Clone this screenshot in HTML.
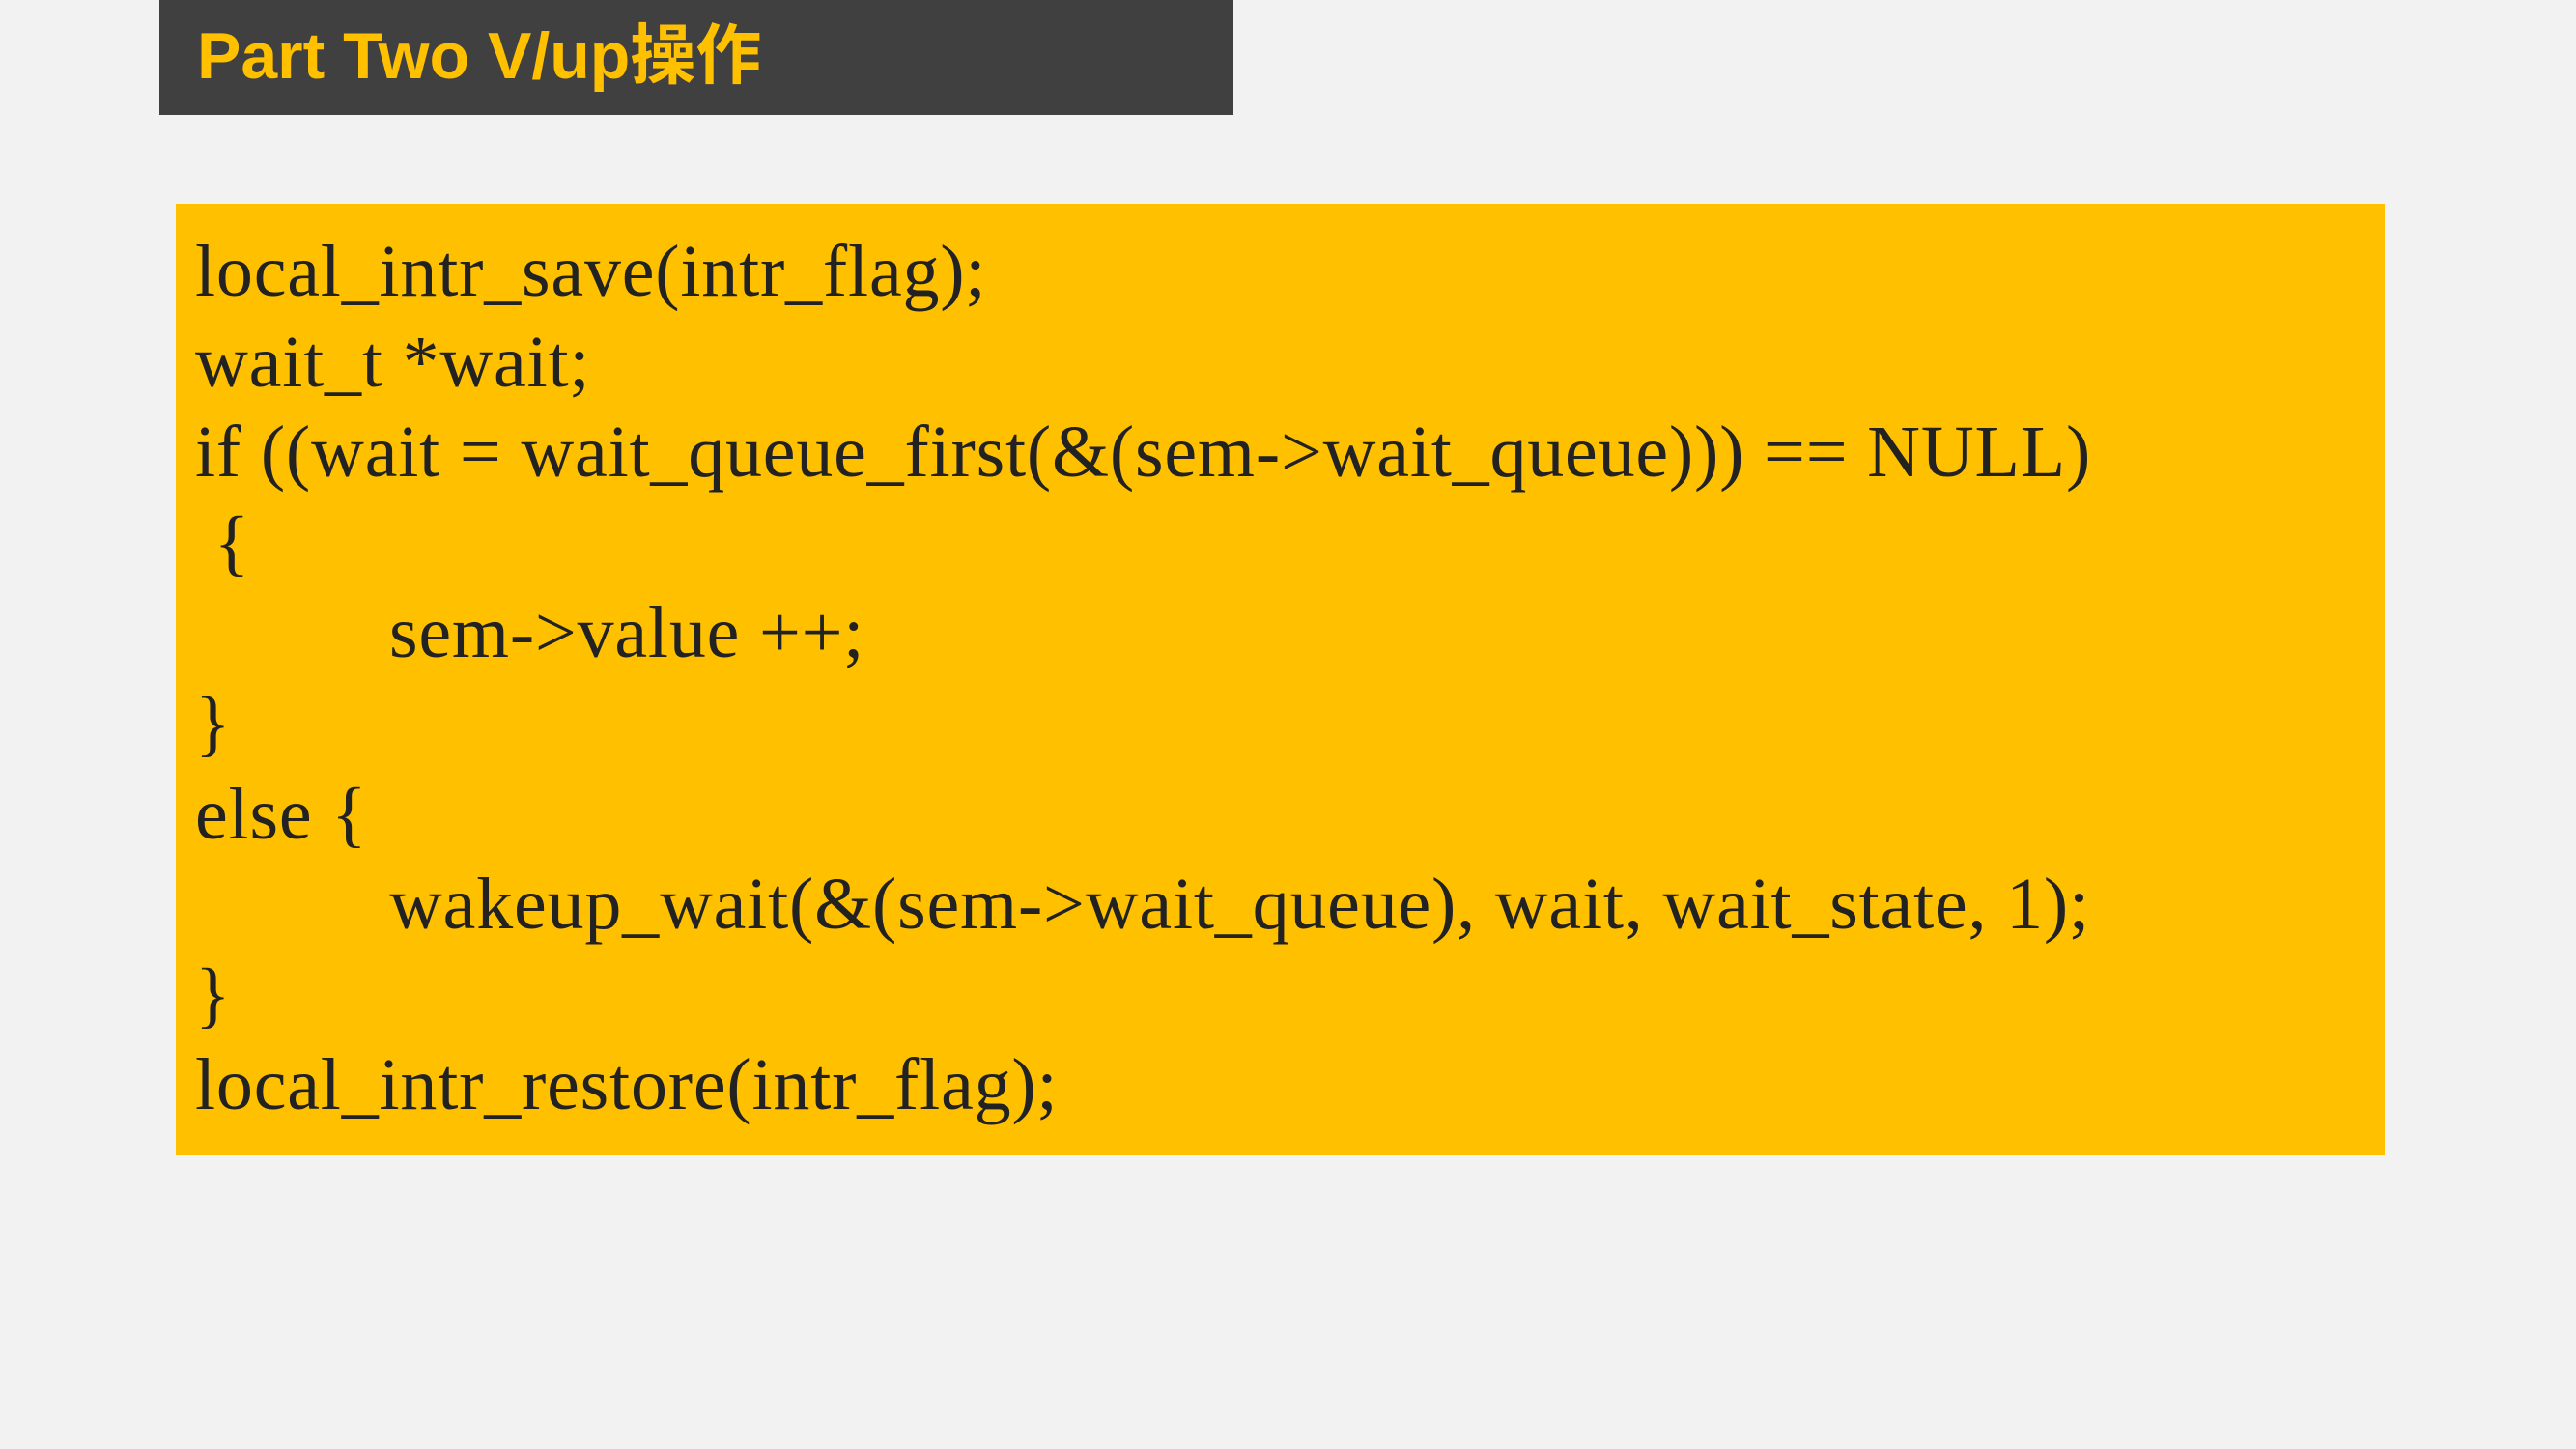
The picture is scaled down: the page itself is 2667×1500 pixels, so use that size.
<!DOCTYPE html>
<html><head><meta charset="utf-8"><style>
body{margin:0;width:2667px;height:1500px;background:#f2f2f2;position:relative;overflow:hidden}
.hd{position:absolute;left:165px;top:0;width:1112px;height:119px;background:#404040}
.t{position:absolute;left:204px;top:0;line-height:1;font:bold 68px "Liberation Sans","Noto Sans CJK SC",sans-serif;color:#ffc000;white-space:nowrap}
.bx{position:absolute;left:182px;top:211px;width:2287px;height:985px;background:#ffc000}
.l{position:absolute;left:202px;font:76px "Liberation Serif",serif;color:#222;white-space:pre;line-height:1;letter-spacing:0.8px}
</style></head><body>
<div class="hd"></div>
<div class="t" style="top:2px">Part Two V/up操作</div>
<div class="bx"></div>
<div class="l" style="top:243px">local_intr_save(intr_flag);</div>
<div class="l" style="top:337px">wait_t *wait;</div>
<div class="l" style="top:430px">if ((wait = wait_queue_first(&amp;(sem-&gt;wait_queue))) == NULL)</div>
<div class="l" style="top:524px"> {</div>
<div class="l" style="top:617px;left:403px">sem-&gt;value ++;</div>
<div class="l" style="top:711px">}</div>
<div class="l" style="top:805px">else {</div>
<div class="l" style="top:898px;left:403px">wakeup_wait(&amp;(sem-&gt;wait_queue), wait, wait_state, 1);</div>
<div class="l" style="top:992px">}</div>
<div class="l" style="top:1085px">local_intr_restore(intr_flag);</div>
</body></html>
